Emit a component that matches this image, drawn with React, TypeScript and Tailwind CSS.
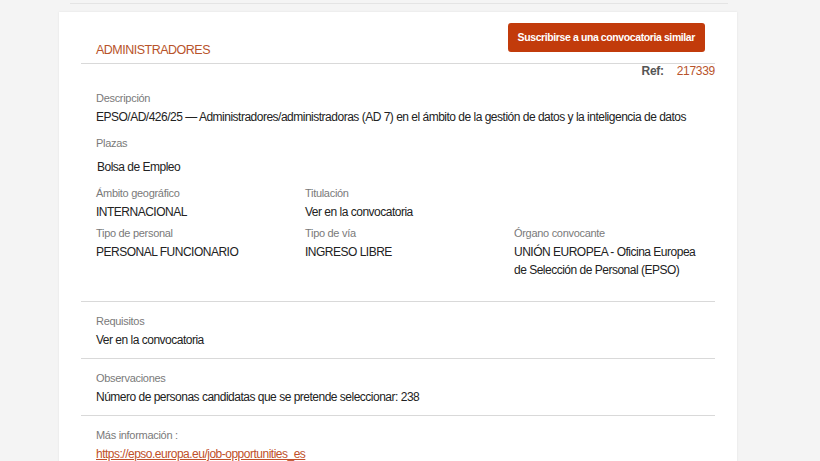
import React from "react";

const font = { fontFamily: '"Liberation Sans", Arial, sans-serif' };

function Field({ label, value, className = "" }: { label: string; value: React.ReactNode; className?: string }) {
  return (
    <div className={className}>
      <p className="text-[11px] leading-[14px] tracking-[-0.3px] text-[#7a7a7a]">{label}</p>
      <div className="mt-[3px] text-[12px] leading-[18px] tracking-[-0.5px] text-[#222]">{value}</div>
    </div>
  );
}

export default function App() {
  return (
    <div className="h-[461px] w-[820px] overflow-hidden bg-[#f4f4f4]" style={font}>
      {/* bottom of previous block */}
      <div className="ml-[70px] h-[4px] w-[658px] border-b border-[#e4e4e4]" />

      <div className="ml-[59px] mt-[8px] w-[678px] bg-white px-[22px] pb-8 pt-[11px] shadow-[0_0_2px_rgba(0,0,0,0.08)]">
        {/* Header */}
        <div className="flex items-end justify-between border-b border-[#d9d9d9]">
          <h1 className="pb-[5px] pl-[15px] text-[12.5px] leading-[16px] tracking-[-0.5px] text-[#b8532a]">
            ADMINISTRADORES
          </h1>
          <button className="mb-[11px] mr-[10px] h-[29px] rounded-[3px] bg-[#c23b0b] px-[10px] text-[10.5px] font-bold tracking-[-0.4px] text-white">
            Suscribirse a una convocatoria similar
          </button>
        </div>

        <div className="flex justify-end gap-[13px] text-[12px] leading-[14px] tracking-[-0.3px]">
          <span className="font-bold text-[#555]">Ref:</span>
          <span className="text-[#b8532a]">217339</span>
        </div>

        <div className="pl-[15px]">
          <Field
            className="mt-[13px]"
            label="Descripción"
            value="EPSO/AD/426/25 — Administradores/administradoras (AD 7) en el ámbito de la gestión de datos y la inteligencia de datos"
          />
          <Field
            className="mt-[10px]"
            label="Plazas"
            value={<span className="ml-px inline-block pt-[5px]">Bolsa de Empleo</span>}
          />

          <div className="mt-[10px] grid grid-cols-[209px_209px_1fr]">
            <Field label="Ámbito geográfico" value="INTERNACIONAL" />
            <Field label="Titulación" value="Ver en la convocatoria" />
            <div />
          </div>
          <div className="mt-[5px] grid grid-cols-[209px_209px_1fr]">
            <Field label="Tipo de personal" value="PERSONAL FUNCIONARIO" />
            <Field label="Tipo de vía" value="INGRESO LIBRE" />
            <Field
              label="Órgano convocante"
              value={
                <>
                  UNIÓN EUROPEA - Oficina Europea
                  <br />
                  de Selección de Personal (EPSO)
                </>
              }
            />
          </div>
        </div>

        <div className="mt-[22px] border-t border-[#d9d9d9] pb-[9px] pl-[15px] pt-[12px]">
          <Field label="Requisitos" value="Ver en la convocatoria" />
        </div>
        <div className="border-t border-[#d9d9d9] pb-[9px] pl-[15px] pt-[12px]">
          <Field label="Observaciones" value="Número de personas candidatas que se pretende seleccionar: 238" />
        </div>
        <div className="border-t border-[#d9d9d9] pl-[15px] pt-[12px]">
          <Field
            label="Más información :"
            value={
              <a href="#" className="text-[#c0502a] underline">
                https://epso.europa.eu/job-opportunities_es
              </a>
            }
          />
        </div>
      </div>
    </div>
  );
}
